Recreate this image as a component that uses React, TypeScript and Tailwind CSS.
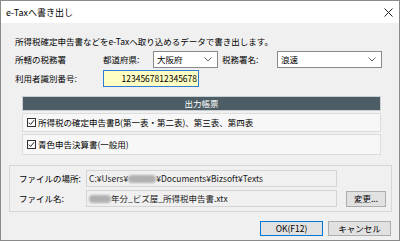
import React from 'react';

const font = { fontFamily: '"Noto Sans CJK JP", "Noto Sans", sans-serif' };

const Chevron = () => (
  <svg width="8" height="5" viewBox="0 0 8 5" className="text-[#555]">
    <path d="M0.5 0.5 L4 4 L7.5 0.5" fill="none" stroke="currentColor" strokeWidth="0.9" />
  </svg>
);

const Select = ({ value, className }: { value: string; className: string }) => (
  <div className={`h-[17px] flex items-center justify-between bg-white border border-[#8a8a8a] pl-[3px] pr-[5px] ${className}`}>
    <span>{value}</span>
    <Chevron />
  </div>
);

const Check = () => (
  <span className="w-[9px] h-[9px] border border-[#333] bg-white flex items-center justify-center shrink-0">
    <svg width="7" height="7" viewBox="0 0 7 7">
      <path d="M0.8 3.6 L2.6 5.4 L6.2 1.2" fill="none" stroke="#222" strokeWidth="1" />
    </svg>
  </span>
);

const Blur = ({ w }: { w: number }) => (
  <span className="inline-block h-[8px] bg-[#b0b0b0] blur-[1.2px] rounded-sm" style={{ width: w }} />
);

const App = () => {
  return (
    <div style={font} className="w-[400px] h-[241px] flex flex-col border border-[#8a8a8a] text-[8.5px] leading-none text-black bg-[#f0f0f0]">
      {/* title bar */}
      <div className="h-[22px] bg-white flex items-center justify-between pl-[5px] pr-[6px] shrink-0">
        <span className="text-[9px]">e-Taxへ書き出し</span>
        <svg width="9" height="9" viewBox="0 0 9 9">
          <path d="M0.5 0.5 L8.5 8.5 M8.5 0.5 L0.5 8.5" stroke="#222" strokeWidth="1" />
        </svg>
      </div>

      <div className="flex-1 flex flex-col">
        <div className="h-[16px] mt-[10px] pl-[14px] flex items-center">
          所得税確定申告書などをe-Taxへ取り込めるデータで書き出します。
        </div>

        <div className="h-[17px] mt-[2px] pl-[14px] flex items-center">
          <span className="w-[88px]">所轄の税務署</span>
          <span className="w-[50px]">都道府県:</span>
          <Select value="大阪府" className="w-[65px]" />
          <span className="ml-[4px] w-[55px]">税務署名:</span>
          <Select value="浪速" className="w-[105px]" />
        </div>

        <div className="h-[17px] mt-[2px] pl-[14px] flex items-center">
          <span className="w-[88px]">利用者識別番号:</span>
          <div className="w-[96px] h-[17px] bg-[#ffffc4] border border-[#2f7bd6] flex items-center justify-end pr-[1px]">
            1234567812345678
          </div>
        </div>

        {/* output forms */}
        <div className="mt-[9px] ml-[21px] mr-[18px] flex flex-col gap-[2px]">
          <div className="h-[15px] bg-[#4c5d65] border border-[#c8d0d4] text-white flex items-center justify-center">
            出力帳票
          </div>
          <div className="h-[19px] bg-[#f7f7f7] border border-[#dcdcdc] flex items-center gap-[2px] pl-[4px]">
            <Check />
            <span>所得税の確定申告書B(第一表・第二表)、第三表、第四表</span>
          </div>
          <div className="h-[21px] bg-[#f7f7f7] border border-[#dcdcdc] flex items-center gap-[2px] pl-[4px]">
            <Check />
            <span>青色申告決算書(一般用)</span>
          </div>
        </div>

        {/* file group */}
        <div className="mt-[10px] ml-[8px] mr-[7px] h-[47px] border border-[#d6d6d6] flex flex-col gap-[3px] pt-[4px] pl-[9px]">
          <div className="h-[17px] flex items-center">
            <span className="w-[67px]">ファイルの場所:</span>
            <div className="w-[251px] h-[17px] border border-[#d4d4d4] flex items-center pl-[2px] text-[#222]">
              C:¥Users¥<Blur w={28} />¥Documents¥Bizsoft¥Texts
            </div>
          </div>
          <div className="h-[17px] flex items-center">
            <span className="w-[67px]">ファイル名:</span>
            <div className="w-[251px] h-[17px] border border-[#d4d4d4] flex items-center pl-[2px] text-[#222]">
              <Blur w={22} />年分_ビズ屋_所得税申告書.xtx
            </div>
            <button className="ml-[9px] w-[40px] h-[16px] bg-[#e1e1e1] border border-[#adadad] flex items-center justify-center">
              変更...
            </button>
          </div>
        </div>

        <div className="mt-[9px] flex justify-end gap-[5px] pr-[8px]">
          <button className="w-[63px] h-[15px] bg-[#e1e1e1] border border-[#0078d7] flex items-center justify-center">
            OK(F12)
          </button>
          <button className="w-[63px] h-[15px] bg-[#e1e1e1] border border-[#adadad] flex items-center justify-center">
            キャンセル
          </button>
        </div>
      </div>
    </div>
  );
};

export default App;
